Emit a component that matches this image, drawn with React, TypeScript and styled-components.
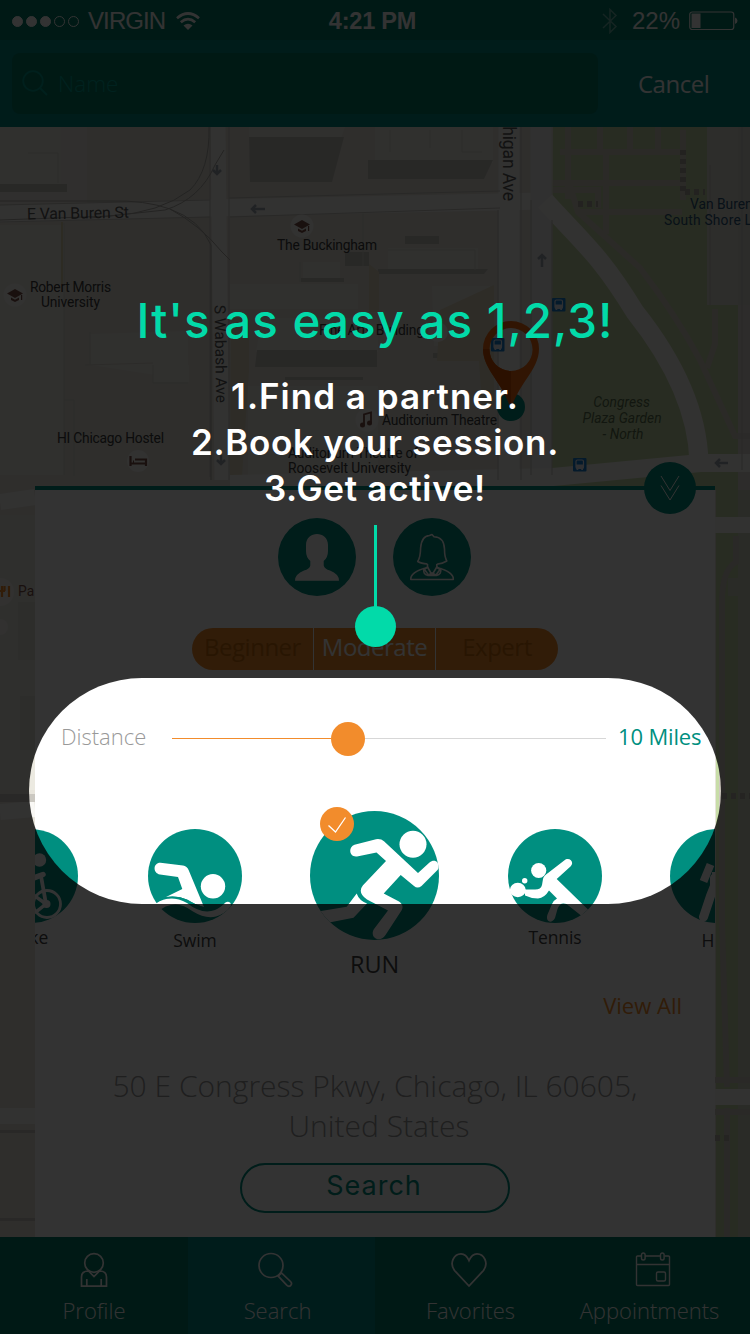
import React from "react";
import styled, { createGlobalStyle } from "styled-components";

const teal = "#008f80";
const orange = "#f28c2c";
const mint = "#02daa9";

const GlobalStyle = createGlobalStyle`
  * { box-sizing: border-box; }
  body { margin: 0; background: #333; }
`;

const Screen = styled.main`
  position: relative;
  display: flex;
  flex-direction: column;
  width: 750px;
  height: 1334px;
  overflow: hidden;
  font-family: "Open Sans", sans-serif;
`;

/* ---------- header ---------- */

const StatusBar = styled.div`
  display: grid;
  grid-template-columns: 1fr auto 1fr;
  align-items: center;
  height: 40px;
  padding: 2px 12px 0;
  background: #007d69;
  color: #fff;
  font: 24px/38px "Liberation Sans", sans-serif;
`;

const StatusGroup = styled.div<{ $end?: boolean }>`
  display: flex;
  align-items: center;
  justify-content: ${(p) => (p.$end ? "flex-end" : "flex-start")};
`;

const Signal = styled.span<{ $on?: boolean }>`
  width: 11px;
  height: 11px;
  margin-right: 3px;
  border: 1px solid #fff;
  border-radius: 50%;
  background: ${(p) => (p.$on ? "#fff" : "transparent")};
`;

const Carrier = styled.span`
  margin: 0 11px 0 6px;
  letter-spacing: -0.9px;
`;

const Clock = styled.span`
  font-weight: 700;
  font-size: 23.5px;
  letter-spacing: -0.2px;
  margin-right: 5px;
`;

const Percent = styled.span`
  margin: 0 8px 0 14px;
`;

const SearchBar = styled.div`
  display: flex;
  align-items: center;
  height: 87px;
  padding: 0 0 1px 12px;
  background: #008a84;
`;

const SearchField = styled.div`
  display: flex;
  align-items: center;
  gap: 10px;
  width: 586px;
  height: 61px;
  padding-left: 10px;
  border-radius: 8px;
  background: #007c66;
  color: #00aa9a;
  font-size: 22.5px;
  font-weight: 300;
`;

const Cancel = styled.button`
  border: 0;
  padding: 0;
  margin-left: 40px;
  background: none;
  color: #fff;
  font: 400 24px "Open Sans", sans-serif;
  letter-spacing: -0.5px;
`;

/* ---------- body ---------- */

const Body = styled.section`
  position: relative;
  height: 1110px;
  padding: 359px 35px 0;
`;

const MapCanvas = styled.svg`
  position: absolute;
  left: 0;
  top: 0;
`;

const Card = styled.div`
  position: relative;
  display: flex;
  flex-direction: column;
  height: 751px;
  background: #fff;
  border-top: 4px solid ${teal};
`;

const CollapseButton = styled.div`
  position: absolute;
  right: 19px;
  top: -28px;
  width: 52px;
  height: 52px;
  border-radius: 50%;
  background: ${teal};
`;

const Avatars = styled.div`
  display: flex;
  justify-content: center;
  gap: 37px;
  margin: 28px 1px 0 0;
`;

const Avatar = styled.div`
  width: 78px;
  height: 78px;
  border-radius: 50%;
  background: ${teal};
`;

const Segments = styled.div`
  display: grid;
  grid-template-columns: 121px 122px 123px;
  width: 366px;
  height: 42px;
  margin: 32px auto 0;
  border-radius: 21px;
  background: ${orange};
  overflow: hidden;
`;

const Segment = styled.div<{ $active?: boolean }>`
  color: ${(p) => (p.$active ? "#fff" : "#c66c0c")};
  font-size: 24px;
  letter-spacing: -0.5px;
  line-height: 38px;
  text-align: center;
  white-space: nowrap;
  & + & {
    border-left: 1px solid #fff;
  }
`;

const DistanceRow = styled.div`
  display: flex;
  align-items: center;
  height: 34px;
  margin-top: 52px;
  padding-left: 26px;
  font-size: 22px;
  line-height: 30px;
`;

const DistanceLabel = styled.span`
  width: 111px;
  margin-top: -6px;
  color: #999;
  font-weight: 300;
`;

const Track = styled.div`
  display: flex;
  align-items: center;
  width: 434px;
`;

const TrackPart = styled.span<{ $filled?: boolean }>`
  height: 1px;
  flex: ${(p) => (p.$filled ? "0 0 159px" : "1")};
  margin-top: -1px;
  background: ${(p) => (p.$filled ? orange : "#d7d7d7")};
`;

const Thumb = styled.span`
  width: 34px;
  height: 34px;
  border-radius: 50%;
  background: ${orange};
`;

const DistanceValue = styled.span`
  margin: -6px 0 0 12px;
  color: ${teal};
  letter-spacing: -0.15px;
  white-space: nowrap;
`;

const Carousel = styled.div`
  display: flex;
  justify-content: space-between;
  height: 176px;
  margin-top: 51px;
  overflow: hidden;
`;

const Rail = styled.div`
  display: grid;
  grid-template-columns: 94px 94px 129px 94px 94px;
  column-gap: 69px;
  flex: none;
  margin-left: -51px;
`;

const Sport = styled.div<{ $large?: boolean; $shift?: number }>`
  position: relative;
  display: flex;
  flex-direction: column;
  align-items: center;
  padding-top: ${(p) => (p.$large ? 4 : 22)}px;
  margin-left: ${(p) => p.$shift ?? 0}px;
  margin-right: ${(p) => -(p.$shift ?? 0)}px;
`;

const SportName = styled.span<{ $large?: boolean; $drop?: number; $indent?: number }>`
  margin-top: ${(p) => (p.$large ? 8 : 2 + (p.$drop ?? 0))}px;
  padding-left: ${(p) => p.$indent ?? 0}px;
  color: #444;
  font-size: ${(p) => (p.$large ? 23.5 : 17.5)}px;
  letter-spacing: -0.1px;
  line-height: ${(p) => (p.$large ? 32 : 24)}px;
  white-space: nowrap;
`;

const Check = styled.div`
  position: absolute;
  left: 10px;
  top: 0;
  width: 34px;
  height: 34px;
  border-radius: 50%;
  background: ${orange};
`;

const ViewAll = styled.a`
  align-self: flex-end;
  margin: 7px 33px 0 0;
  color: ${orange};
  font-size: 22px;
  line-height: 30px;
`;

const Address = styled.p`
  margin: 46px 0 0;
  color: #999;
  font-size: 30px;
  font-weight: 300;
  line-height: 40px;
  text-align: center;
`;

const AddressLine = styled.span<{ $indent?: number }>`
  display: block;
  padding-left: ${(p) => p.$indent ?? 0}px;
`;

const SearchButton = styled.button`
  width: 270px;
  height: 50px;
  margin: 17px auto 0;
  padding: 0 2px 4px 0;
  border: 2px solid ${teal};
  border-radius: 25px;
  background: #fff;
  color: ${teal};
  font: 400 27px/38px Inter, sans-serif;
  letter-spacing: 1px;
`;

/* ---------- tab bar ---------- */

const TabBar = styled.nav`
  display: grid;
  grid-template-columns: 188px 187px 187px 188px;
  height: 97px;
`;

const Tab = styled.div<{ $active?: boolean }>`
  display: flex;
  flex-direction: column;
  align-items: center;
  padding-top: 15px;
  background: ${(p) => (p.$active ? "#008a88" : "#007d69")};
  color: #fff;
`;

const TabIcon = styled.span<{ $nudge?: number }>`
  display: flex;
  height: 36px;
  padding-right: ${(p) => p.$nudge ?? 0}px;
`;

const TabLabel = styled.span<{ $before?: number; $after?: number }>`
  margin-top: 7px;
  padding: 0 ${(p) => p.$after ?? 0}px 0 ${(p) => p.$before ?? 0}px;
  font-size: 22px;
  font-weight: 300;
  line-height: 30px;
`;

/* ---------- coach mark ---------- */

const Coach = styled.div`
  position: absolute;
  inset: 0;
  display: flex;
  flex-direction: column;
  align-items: center;
  padding-top: 291px;
  color: #fff;
  font-family: Inter, sans-serif;
`;

const Spotlight = styled.div`
  position: absolute;
  left: 29px;
  top: 678px;
  width: 692px;
  height: 226px;
  border-radius: 113px;
  box-shadow: 0 0 0 1400px rgba(0, 0, 0, 0.8);
`;

const CoachTitle = styled.h1`
  position: relative;
  margin: 0 0 22px;
  color: ${mint};
  font-size: 47.5px;
  font-weight: 550;
  line-height: 60px;
  letter-spacing: 1px;
  white-space: nowrap;
`;

const CoachStep = styled.div<{ $spacing: number }>`
  position: relative;
  font-size: 35px;
  font-weight: 600;
  line-height: 46px;
  letter-spacing: ${(p) => p.$spacing}px;
  white-space: nowrap;
`;

const Pointer = styled.div`
  position: relative;
  width: 3px;
  height: 82px;
  margin: 14px 0 0 1px;
  background: ${mint};
`;

const PointerDot = styled.div`
  position: relative;
  width: 41px;
  height: 41px;
  margin: -1px 0 0 1px;
  border-radius: 50%;
  background: ${mint};
`;

/* ---------- drawings ---------- */

const Wifi = () => (
  <svg width="24" height="18" viewBox="0 0 24 18" fill="none" stroke="#fff" strokeWidth="2.7">
    <path d="M1 6.200Q12 -3.200 23 6.200" />
    <path d="M4.800 10.200Q12 4 19.200 10.200" />
    <path d="M12 18L7.500 13.500Q12 9.800 16.500 13.500Z" fill="#fff" stroke="none" />
  </svg>
);

const Bluetooth = () => (
  <svg width="16" height="26" viewBox="0 0 16 26" fill="none" stroke="#fff" strokeOpacity=".42" strokeWidth="1.5">
    <path d="M1 6L14 18.500L8 24.500V1.500L14 7.500L1 20" />
  </svg>
);

const Battery = () => (
  <svg width="50" height="20" viewBox="0 0 50 20">
    <rect x="1.75" y="1" width="44" height="17.5" rx="2.5" fill="none" stroke="#fff" strokeWidth="1.2" />
    <rect x="3.5" y="2.5" width="9" height="14.5" fill="#fff" />
    <path d="M47 6.500q2.500 1 2.500 3.300t-2.500 3.300z" fill="#fff" />
  </svg>
);

const Lens = () => (
  <svg width="26" height="26" viewBox="0 0 26 26" fill="none" stroke="#00a090" strokeWidth="1.8">
    <circle cx="11" cy="11" r="9.8" />
    <path d="M18 18l7 7" />
  </svg>
);

const Chevrons = () => (
  <svg width="52" height="52" viewBox="0 0 52 52" fill="none" stroke="#fff" strokeWidth="1">
    <path d="M17 14l9 14.500 9-14.500M17 23.500L26 38l9-14.500" />
  </svg>
);

const Man = () => (
  <svg width="78" height="78" viewBox="0 0 78 78" fill="#fff">
    <path d="M28 27C28 12.300 50 12.300 50 27v6q0 6.500-4.300 10v4.500q1 3.500 6.300 5Q61 56 61 62.700H17Q17 56 26 52.500q5.500-1.500 6.300-5V43Q28 39.500 28 33Z" />
  </svg>
);

const Woman = () => (
  <svg width="78" height="78" viewBox="0 0 78 78" fill="none" stroke="#fff" strokeWidth="1.6" strokeLinejoin="round">
    <path d="M34.500 46Q28 45.500 24.700 43.500Q27.500 39 27.600 30Q28.500 18 36.500 17.500L39 16.500L41 18.700Q51 19 51.500 31Q51.500 39 53.800 43Q50 45.500 43.800 46.200" />
    <path d="M34.500 46v3.500Q17 54 17.800 61.500H60.300Q61 54 43.800 49.500V46" />
    <path d="M31 50Q29.500 56.500 35 57.500h8.500Q49 56.500 47.500 50M34.500 49l-3 2.500 4 5.500 3.500-2 4 2 4-5.500-3.200-2.500-4.800 8z" />
  </svg>
);

const TickMark = () => (
  <svg width="34" height="34" viewBox="0 0 34 34" fill="none" stroke="#fff" strokeWidth="1.3">
    <path d="M8.500 18.500l7 6.500L25.500 10.500" />
  </svg>
);

const BikeIcon = () => (
  <svg width="94" height="94" viewBox="-16 829 94 94" fill="none" stroke="#fff">
    <circle cx="31" cy="876" r="47" fill={teal} stroke="none" />
    <circle cx="39.5" cy="860" r="6.7" fill="#fff" stroke="none" />
    <path d="M26 881L43 874.500" strokeWidth="5.5" strokeLinecap="round" />
    <path d="M41 876l5 28" strokeWidth="3.8" />
    <circle cx="47" cy="904" r="13.5" strokeWidth="2.8" />
    <path d="M32 894l14 10 M46 904l-10 8" strokeWidth="3.5" strokeLinecap="round" />
    <circle cx="46.5" cy="904" r="4" fill="#fff" stroke="none" />
  </svg>
);

const SwimIcon = () => (
  <svg width="94" height="94" viewBox="148 829 94 94">
    <circle cx="195" cy="876" r="47" fill={teal} />
    <g fill="#fff">
      <circle cx="213" cy="886.3" r="12.2" />
      <path d="M160.500 862.700L183 865.500Q187 866.200 188.600 870L204 907Q194 904 187 899.500Q178 895.500 166 897L182.300 889L178 877L160 874.500C152.500 873 153 862.500 160.500 862.700Z" />
      <path d="M156 903.500Q170 894 187 903Q202 915 215 910Q220 908 225.500 902.500Q228 900.800 230.500 903L231 906Q225 914 216 916.500Q205 919 193 911.500Q181 902.500 171 905Q165 906 161.500 909Q157 908 156 903.500Z" />
    </g>
    <path d="M166 897.700Q178 896 187 900.500Q194 905 203 908" fill="none" stroke={teal} strokeWidth="1.6" />
  </svg>
);

const RunIcon = () => (
  <svg width="129" height="129" viewBox="310 811 129 129">
    <clipPath id="run">
      <circle cx="374.5" cy="875.5" r="64.5" />
    </clipPath>
    <g clipPath="url(#run)">
      <rect x="310" y="811" width="129" height="129" fill={teal} />
      <g fill="#fff">
        <circle cx="413" cy="844.3" r="13.5" />
        <path d="M354.500 844.700L376 839.200Q381 838.500 384 841.300L418 873L429.500 862.500C435.500 857.500 442 864.500 437.500 870L421.500 886Q417.500 889 414 886L400.700 875L383.700 893.500L399 901.500Q404.500 905.500 401.500 910.500L385.500 935C379.500 944 369 937 374 929L388 910.500L367 899.500Q357 892.500 363 885.300L386 861L376.500 852.500L357 856.500C349 857.500 348 847 354.500 844.700Z" />
        <path d="M315 912L346.700 906.700L356.700 893.500Q359 900.500 367 903.500L353.500 917.700L328 922.800Z" />
      </g>
    </g>
  </svg>
);

const TennisIcon = () => (
  <svg width="94" height="94" viewBox="508 829 94 94">
    <circle cx="555" cy="876" r="47" fill={teal} />
    <g fill="#fff">
      <circle cx="538.7" cy="870.5" r="7.6" />
      <circle cx="524.7" cy="880.8" r="2.7" />
      <ellipse cx="517.8" cy="890" rx="8" ry="7.2" />
      <path d="M525 889.500Q531 889.500 535 889.500Q541 889.500 542 885L543 879Q543.500 876 548 873L565.500 859.500C570.500 857.500 574.500 862.500 570.500 866.500L556.700 879L588 909.500L581 915.500L566.500 904Q560 901.500 557.500 909L555 918C551.500 924.500 545 922 547.500 914.500L552 904Q554 900 557 898.500L549 890.500Q544.500 898 538 898.500Q531 898.500 525 895.500Z" />
    </g>
  </svg>
);

const HikeIcon = () => (
  <svg width="94" height="94" viewBox="670 829 94 94" fill="none" stroke="#fff">
    <circle cx="717" cy="876" r="47" fill={teal} stroke="none" />
    <path d="M710.500 864.500L703.500 881.500" strokeWidth="8" />
    <path d="M714.500 878V886L710.500 896L703.500 917" strokeWidth="9" strokeLinecap="round" strokeLinejoin="round" />
    <path d="M712 872h8v22h-8z" fill="#fff" stroke="none" />
  </svg>
);

const ProfileIcon = () => (
  <svg width="28" height="36" viewBox="0 0 28 36" fill="none" stroke="#fff" strokeWidth="1.7">
    <circle cx="14" cy="11" r="9.3" />
    <path d="M8.500 19Q1.500 19 1.500 25v9.200h25V25q0-6-7-6L14 24.500zM6.800 34v-7M21.200 34v-7" />
  </svg>
);

const SearchIcon = () => (
  <svg width="35" height="36" viewBox="0 0 35 36" fill="none" stroke="#fff" strokeWidth="1.7">
    <circle cx="13" cy="13.5" r="12" />
    <path d="M20.200 24.200l8.500 9q2 2 4 .3 1.800-2-.2-4l-9-8.500z" />
  </svg>
);

const HeartIcon = () => (
  <svg width="36" height="36" viewBox="0 0 36 36" fill="none" stroke="#fff" strokeWidth="1.8">
    <path d="M18 34L3.500 18.500C-2 11 3 1.800 10 1.800Q15 1.800 18 8.500Q21 1.800 26 1.800C33 1.800 38 11 32.500 18.500Z" />
  </svg>
);

const CalendarIcon = () => (
  <svg width="36" height="36" viewBox="0 0 36 36" fill="none" stroke="#fff" strokeWidth="1.4">
    <path d="M6 4H2.500Q1.500 4 1.500 5v27.500q0 1 1 1h31q1 0 1-1V5q0-1-1-1H29.500M10 4h15.500M1.500 12.500h33" />
    <rect x="6.5" y="1" width="3.6" height="7" rx="1.8" />
    <rect x="25.5" y="1" width="3.6" height="7" rx="1.8" />
    <rect x="21.5" y="20" width="9" height="9" rx="1.5" />
  </svg>
);

const Bus = ({ x, y }: { x: number; y: number }) => (
  <g transform={`translate(${x} ${y})`}>
    <rect width="13.500" height="13.500" rx="1" fill="#1680d8" />
    <rect x="3" y="2" width="7.5" height="8.5" rx="1.500" fill="none" stroke="#e8f1fa" strokeWidth="1.200" />
    <path d="M3 6.500h7.500v4H3zM3.500 10h1.800v2H3.500zM8.200 10H10v2H8.200z" fill="#e8f1fa" />
  </g>
);

const School = ({ x, y }: { x: number; y: number }) => (
  <g transform={`translate(${x} ${y})`}>
    <circle r="11.5" fill="#f9f7f3" />
    <path d="M-8 -1.500L0 -6L8 -1.500L0 3ZM-4 2.500L0 4.800L4 2.500V5L0 7L-4 5ZM6 0h1.200v5H6z" fill="#7d5148" />
  </g>
);

const CityMap = () => (
  <MapCanvas width="750" height="1110" viewBox="0 127 750 1110">
    <rect y="127" width="750" height="1110" fill="#e8e5dc" />
    <rect y="127" width="87" height="80" fill="#eeebe3" />
    {/* blocks */}
    <g fill="#f1eee6">
      <path d="M0 127h61v57H0zM249 127h96l-9 26h-87zM375 127h118v36H375zM0 225h64v250H0zM90 334l98-3v49l-97-15zM153 365h36v17h-36z" />
      <path d="M230 284h128v25H230zM262 318h116v34H256zM303 262h37v20h-37zM388 248h90v24h-90zM432 286h58v60h-56zM248 386h130v90H248z" />
    </g>
    <g fill="#c9c6bf">
      <path d="M0 184h67v8H0zM249 137h95l-12 45h-82zM368 160h125l-9 19H368zM301 278h43v4h-43zM345 252h24v14h-24zM378 269h110l-4 5H378zM257 350h120v17H255zM405 236h34v8h-34zM433 353h60v5h-60zM285 377h78v3h-78z" />
    </g>
    <g fill="none" stroke="#dcd8ce">
      <path d="M85 365l68-2M153 365v18h35M90 332v33M28 153h30V183M64 223V475M64 400h10v76M300 262v20M388 250h87v20M390 130v22M430 130v18M462 130v22h20M303 206h60v60" />
      <path d="M62 222v70" stroke="#e0d5ad" strokeWidth="2" />
    </g>
    <path d="M231 318h18v52l-7 106h-12zM369 264l10 8v40h-10zM440 310l54-25v120h-12l-3-44h-42z" fill="#e5dcc0" />
    {/* park */}
    <path d="M553 127h154v178h31v185h-22v747h34V560 490h-198z" fill="#c8dda8" />
    <g fill="none" stroke="#d5cfc4" strokeWidth="6">
      <path d="M568 127v72M600 127v27M630 127v27M658 127v27M560 152h120M553 183h128M606 154v80M553 190h45v18M570 186l8 26L640 268Q676 315 700 360L735 436H750M580 212h102M715 309v35l-8 24M683 130v70" />
    </g>
    <path d="M683 150v42M578 204h20M685 192h20" fill="none" stroke="#aeaa9f" strokeWidth="6" strokeDasharray="5 4" />
    <path d="M707 127h43v178h-43z" fill="#e2dfd8" />
    <path d="M738 127h12v1110h-12zM728 578h22v18h-22z" fill="#d8d6cf" opacity=".65" />
    {/* streets */}
    <g fill="none" stroke="#f9f8f5">
      <path d="M0 214L210 208L545 201" strokeWidth="17" />
      <path d="M218 127L222 480" strokeWidth="15" />
      <path d="M509 127V480" strokeWidth="21" />
      <path d="M541 127V480" strokeWidth="21" stroke="#f0efed" />
      <path d="M545 201C585 245 600 255 635 312Q697 390 699 462" strokeWidth="19" />
      <path d="M230 484L553 477L700 463H750" strokeWidth="18" />
      <path d="M0 502L35 497M0 812L35 809M0 1116H35M715 525H750M715 1097H750" strokeWidth="16" />
    </g>
    <g fill="none" stroke="#cac8c2" strokeWidth="1">
      <path d="M0 222L210 217M230 217L500 208M0 205L210 200M229 198L500 191M210 127V477M229 127V480M498 210V480M521 127V480M531 200V475M552 220V475M710 165V305M742 127V470" />
    </g>
    <g fill="none" stroke="#b2b0ab">
      <path d="M0 201H110Q145 200 170 209Q200 225 222 252L230 260M0 220L110 216Q160 213 190 190Q210 170 209 127M90 218L165 210Q200 199 215 165L224 150M170 209Q200 220 211 245V480" />
    </g>
    <g fill="none" stroke="#a2a8b4" strokeWidth="2.5">
      <path d="M265 209h-13m4-4l-4 4 4 4M217 165v9m-4-4l4 4 4-4M542 267v-12m-4 4l4-4 4 4M728 463h-12m4-4l-4 4 4 4M221 455v9m-4-4l4 4 4-4" />
    </g>
    {/* area beside the panel */}
    <path d="M0 515h35V790H0z" fill="#eceae1" />
    <path d="M18 602h17v58H18zM20 696h15v54H20z" fill="#e2dfd7" />
    <path d="M0 794h35v8H0zM0 1130h35v3H0zM0 1218h35v3H0z" fill="#cbc8c1" />
    <g fill="none" stroke="#d0cac0" strokeWidth="6">
      <path d="M736 536v26q-14 8-14 40v320l5 165M727 1108v129M715 1080h35M715 1112h35" />
      <path d="M722 796h28M715 1138h16" strokeDasharray="5 4" stroke="#b9b4ab" />
    </g>
    <circle cx="0" cy="592" r="14" fill="#f7f5f0" />
    <circle cx="0" cy="627" r="8" fill="#f7f5f0" />
    <path d="M2 586v11M4.500 586v5M0 591h5M9 586v11" stroke={orange} strokeWidth="2.2" />
    {/* places */}
    <School x={302} y={226} />
    <School x={15} y={295} />
    <circle cx="138" cy="461" r="11" fill="#f9f7f3" />
    <path d="M130.500 456v10M130.500 463.500h15.500v2.500M135 459.500h11v4M133 461.500h1" fill="none" stroke="#7d5148" strokeWidth="2.2" />
    <circle cx="367" cy="420" r="11.5" fill="#f9f7f3" />
    <path d="M364 424.500v-10l7-2v10" fill="none" stroke="#7d5148" strokeWidth="1.8" />
    <circle cx="362.500" cy="425" r="2.5" fill="#7d5148" />
    <circle cx="369.500" cy="423" r="2.5" fill="#7d5148" />
    <circle cx="438" cy="332" r="10" fill="#f9f7f3" />
    <Bus x={552} y={298} />
    <Bus x={491} y={338} />
    <Bus x={573} y={458} />
    <g fontFamily="Roboto, sans-serif" fontSize="13.8" fill="#3c3c3c">
      <g fontSize="16" fill="#5a5a5a">
        <text x="27" y="219.500" textLength="102" transform="rotate(-1 27 219)">E Van Buren St</text>
        <text textLength="98" fontSize="15.500" transform="translate(214.500 305) rotate(89)">S Wabash Ave</text>
        <text textLength="103" fontSize="17.500" transform="translate(502.500 98) rotate(90)">Michigan Ave</text>
      </g>
      <text x="277" y="249.500" textLength="100">The Buckingham</text>
      <text x="30" y="291.500" textLength="81">Robert Morris</text>
      <text x="41" y="307" textLength="59">University</text>
      <text x="57" y="442.500" textLength="107">HI Chicago Hostel</text>
      <text x="319" y="335" textLength="105">Fine Arts Building</text>
      <text x="382" y="425" textLength="115">Auditorium Theatre</text>
      <text x="288" y="457.500" textLength="130">Auditorium Theatre of</text>
      <text x="288" y="473" textLength="123">Roosevelt University</text>
      <g fill="#2a5578">
        <text x="690" y="208.500">Van Buren St</text>
        <text x="664" y="224.500" letterSpacing=".2">South Shore Line</text>
      </g>
      <g fill="#5b7150" fontStyle="italic" textAnchor="middle">
        <text x="621.5" y="406.500">Congress</text>
        <text x="622" y="422.500">Plaza Garden</text>
        <text x="623" y="438.500">- North</text>
      </g>
      <text x="18" y="596" fill="#7d5148">Pa</text>
    </g>
    {/* current position */}
    <circle cx="511" cy="407" r="14" fill={teal} />
    <path fillRule="evenodd" d="M511 410C505 385 483 370 483 349A28 28 0 0 1 539 349C539 370 517 385 511 410ZM511 328a21.500 21.500 0 1 0 0 43a21.500 21.500 0 0 0 0-43Z" fill="#f26a12" />
    <path d="M511 371v39C505 385 483 370 483 349h6.500A21.500 21.500 0 0 0 511 371Z" fill="#d65000" />
  </MapCanvas>
);

export default function App() {
  return (
    <Screen>
      <GlobalStyle />
      <StatusBar>
        <StatusGroup>
          {[true, true, true, false, false].map((on, i) => (
            <Signal key={i} $on={on} />
          ))}
          <Carrier>VIRGIN</Carrier>
          <Wifi />
        </StatusGroup>
        <Clock>4:21 PM</Clock>
        <StatusGroup $end>
          <Bluetooth />
          <Percent>22%</Percent>
          <Battery />
        </StatusGroup>
      </StatusBar>
      <SearchBar>
        <SearchField>
          <Lens />
          Name
        </SearchField>
        <Cancel>Cancel</Cancel>
      </SearchBar>

      <Body>
        <CityMap />
        <Card>
          <CollapseButton>
            <Chevrons />
          </CollapseButton>
          <Avatars>
            <Avatar>
              <Man />
            </Avatar>
            <Avatar>
              <Woman />
            </Avatar>
          </Avatars>
          <Segments>
            <Segment>Beginner</Segment>
            <Segment $active>Moderate</Segment>
            <Segment>Expert</Segment>
          </Segments>
          <DistanceRow>
            <DistanceLabel>Distance</DistanceLabel>
            <Track>
              <TrackPart $filled />
              <Thumb />
              <TrackPart />
            </Track>
            <DistanceValue>10 Miles</DistanceValue>
          </DistanceRow>
          <Carousel>
            <Rail>
              <Sport>
                <BikeIcon />
                <SportName>Bike</SportName>
              </Sport>
              <Sport $shift={1}>
                <SwimIcon />
                <SportName $drop={3}>Swim</SportName>
              </Sport>
              <Sport $large>
                <RunIcon />
                <Check>
                  <TickMark />
                </Check>
                <SportName $large>RUN</SportName>
              </Sport>
              <Sport>
                <TennisIcon />
                <SportName>Tennis</SportName>
              </Sport>
              <Sport $shift={-1}>
                <HikeIcon />
                <SportName $drop={3} $indent={5}>
                  Hike
                </SportName>
              </Sport>
            </Rail>
          </Carousel>
          <ViewAll>View All</ViewAll>
          <Address>
            <AddressLine>50 E Congress Pkwy, Chicago, IL 60605,</AddressLine>
            <AddressLine $indent={8}>United States</AddressLine>
          </Address>
          <SearchButton>Search</SearchButton>
        </Card>
      </Body>

      <TabBar>
        <Tab>
          <TabIcon>
            <ProfileIcon />
          </TabIcon>
          <TabLabel>Profile</TabLabel>
        </Tab>
        <Tab $active>
          <TabIcon $nudge={12}>
            <SearchIcon />
          </TabIcon>
          <TabLabel $after={8}>Search</TabLabel>
        </Tab>
        <Tab>
          <TabIcon>
            <HeartIcon />
          </TabIcon>
          <TabLabel $before={4}>Favorites</TabLabel>
        </Tab>
        <Tab>
          <TabIcon $nudge={6}>
            <CalendarIcon />
          </TabIcon>
          <TabLabel $after={13}>Appointments</TabLabel>
        </Tab>
      </TabBar>

      <Coach>
        <Spotlight />
        <CoachTitle>It's as easy as 1,2,3!</CoachTitle>
        <CoachStep $spacing={1}>1.Find a partner.</CoachStep>
        <CoachStep $spacing={0.7}>2.Book your session.</CoachStep>
        <CoachStep $spacing={0.7}>3.Get active!</CoachStep>
        <Pointer />
        <PointerDot />
      </Coach>
    </Screen>
  );
}
